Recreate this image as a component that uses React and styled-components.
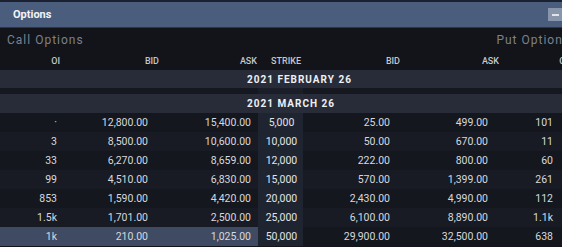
import React from "react";
import styled, { createGlobalStyle } from "styled-components";

const GlobalStyle = createGlobalStyle`
  html, body {
    margin: 0;
    padding: 0;
    background: #121419;
  }
  body {
    font-family: Roboto, "Liberation Sans", sans-serif;
  }
`;

const COLUMNS = "64px 98px 96px 45px 97px 100px 72px";

const CALLS = [
  { oi: "·", bid: "12,800.00", ask: "15,400.00", strike: "5,000" },
  { oi: "3", bid: "8,500.00", ask: "10,600.00", strike: "10,000" },
  { oi: "33", bid: "6,270.00", ask: "8,659.00", strike: "12,000" },
  { oi: "99", bid: "4,510.00", ask: "6,830.00", strike: "15,000" },
  { oi: "853", bid: "1,590.00", ask: "4,420.00", strike: "20,000" },
  { oi: "1.5k", bid: "1,701.00", ask: "2,500.00", strike: "25,000" },
  { oi: "1k", bid: "210.00", ask: "1,025.00", strike: "50,000" },
];

const PUTS = [
  { bid: "25.00", ask: "499.00", oi: "101" },
  { bid: "50.00", ask: "670.00", oi: "11" },
  { bid: "222.00", ask: "800.00", oi: "60" },
  { bid: "570.00", ask: "1,399.00", oi: "261" },
  { bid: "2,430.00", ask: "4,990.00", oi: "112" },
  { bid: "6,100.00", ask: "8,890.00", oi: "1.1k" },
  { bid: "29,900.00", ask: "32,500.00", oi: "638" },
];

const Window = styled.div`
  width: 562px;
  height: 247px;
  overflow: hidden;
  background: #121419;
  border-top: 2px solid #1b2131;
  box-sizing: border-box;
`;

const TitleBar = styled.div`
  height: 25px;
  display: flex;
  align-items: center;
  justify-content: space-between;
  padding-left: 13px;
  background: #4b5d7d;
  border-bottom: 1px solid #2c3548;
`;

const Title = styled.span`
  color: #f2f4f8;
  font-size: 11px;
  font-weight: 700;
`;

const MinButton = styled.div`
  width: 14px;
  height: 13px;
  background: #8995ab;
  display: flex;
  align-items: center;
  justify-content: center;

  &::before {
    content: "";
    width: 7px;
    height: 2px;
    background: #dfe3ea;
  }
`;

const Content = styled.div`
  width: 572px;
`;

const SideLabels = styled.div`
  height: 23px;
  display: flex;
  align-items: center;
  justify-content: space-between;
  padding: 0 2px 0 7px;
  color: #7b8190;
  font-size: 12px;
  letter-spacing: 1px;
`;

const Row = styled.div`
  display: grid;
  grid-template-columns: ${COLUMNS};
  height: ${({ $h }) => $h || 19}px;
  align-items: stretch;
`;

const HeadCell = styled.div`
  display: flex;
  align-items: center;
  justify-content: flex-end;
  padding-right: ${({ $pr }) => $pr || 0}px;
  color: #c3c7cf;
  font-size: 9px;
  font-weight: 500;
`;

const ExpiryBand = styled.div`
  height: ${({ $h }) => $h}px;
  display: flex;
  align-items: center;
  padding-left: 247px;
  background: #272c38;
  color: #eef0f4;
  font-size: 10px;
  font-weight: 700;
  letter-spacing: 1px;
`;

const Gap = styled.div`
  height: 6px;
  display: grid;
  grid-template-columns: ${COLUMNS};
  background: #15181f;
`;

const GapStrike = styled.div`
  grid-column: 4;
  background: #1a1e29;
`;

const Cell = styled.div`
  display: flex;
  align-items: center;
  justify-content: flex-end;
  padding-right: ${({ $pr }) => $pr}px;
  font-size: 10.5px;
  color: #d6d9df;
  background: ${({ $bg }) => $bg};
`;

const StrikeCell = styled.div`
  display: flex;
  align-items: center;
  justify-content: center;
  padding-left: 2px;
  font-size: 10.5px;
  color: #e2e5ea;
  background: #1f2431;
`;

const DataRow = ({ call, put, index }) => {
  const highlighted = index === CALLS.length - 1;
  const base = index % 2 === 0 ? "#14171e" : "#181b23";
  const left = highlighted ? "#3e4b63" : base;
  return (
    <Row>
      <Cell $pr={7} $bg={left}>{call.oi}</Cell>
      <Cell $pr={14} $bg={left}>{call.bid}</Cell>
      <Cell $pr={7} $bg={left}>{call.ask}</Cell>
      <StrikeCell>{call.strike}</StrikeCell>
      <Cell $pr={10} $bg={base}>{put.bid}</Cell>
      <Cell $pr={12} $bg={base}>{put.ask}</Cell>
      <Cell $pr={19} $bg={base}>{put.oi}</Cell>
    </Row>
  );
};

export default function App() {
  return (
    <>
      <GlobalStyle />
      <Window>
        <TitleBar>
          <Title>Options</Title>
          <MinButton />
        </TitleBar>
        <Content>
          <SideLabels>
            <span>Call Options</span>
            <span>Put Options</span>
          </SideLabels>
          <Row $h={19}>
            <HeadCell $pr={4}>OI</HeadCell>
            <HeadCell $pr={3}>BID</HeadCell>
            <HeadCell $pr={1}>ASK</HeadCell>
            <HeadCell $pr={2}>STRIKE</HeadCell>
            <HeadCell $pr={0}>BID</HeadCell>
            <HeadCell $pr={1}>ASK</HeadCell>
            <HeadCell $pr={4}>OI</HeadCell>
          </Row>
          <ExpiryBand $h={18}>2021 FEBRUARY 26</ExpiryBand>
          <Gap>
            <GapStrike />
          </Gap>
          <ExpiryBand $h={19}>2021 MARCH 26</ExpiryBand>
          {CALLS.map((call, i) => (
            <DataRow key={call.strike} call={call} put={PUTS[i]} index={i} />
          ))}
        </Content>
      </Window>
    </>
  );
}
